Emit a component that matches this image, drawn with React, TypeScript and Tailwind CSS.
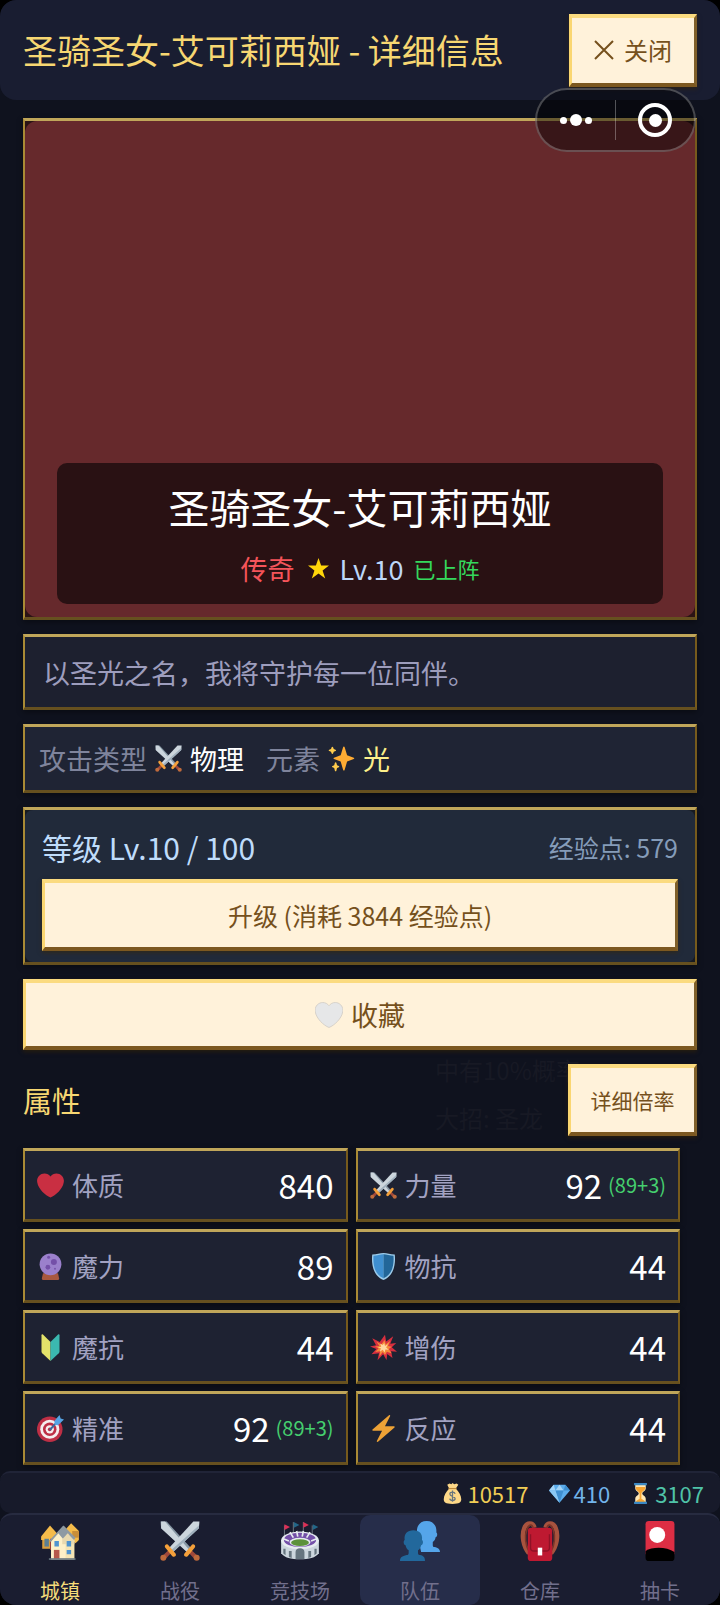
import type { ReactNode } from "react";
import { clsx } from "clsx";

interface IconProps {
    className?: string;
}

interface Stat {
    id: string;
    label: string;
    value: number;
    bonus?: string;
    icon: (props: IconProps) => ReactNode;
}

const HEART =
    "M35.885 11.833c0-5.45-4.418-9.868-9.867-9.868-3.308 0-6.227 1.633-8.018 4.129-1.791-2.496-4.71-4.129-8.017-4.129-5.45 0-9.868 4.417-9.868 9.868 0 .772.098 1.52.266 2.241C1.751 22.587 11.216 31.568 18 34.034c6.783-2.466 16.249-11.447 17.617-19.959.17-.721.268-1.469.268-2.242z";

function Svg({ className, children }: { className?: string; children: ReactNode }) {
    return (
        <svg viewBox="0 0 36 36" className={clsx("shrink-0", className)} aria-hidden="true">
            {children}
        </svg>
    );
}

function HeartIcon({ className }: IconProps) {
    return (
        <Svg className={className}>
            <path fill="#c92f42" d={HEART} />
        </Svg>
    );
}

function WhiteHeartIcon({ className }: IconProps) {
    return (
        <Svg className={className}>
            <path fill="#e6e7e8" stroke="#cfcac2" strokeWidth="1" d={HEART} />
        </Svg>
    );
}

function SwordsIcon({ className }: IconProps) {
    return (
        <Svg className={className}>
            <path fill="#8899a6" d="M0.5 0.5h5.5L28.5 25l-3.8 3.4L1 6.5z" />
            <path fill="#ccd6dd" d="M1 4V.5h3.5L26.8 26.5l-2 1.9L1 6.5z" />
            <path fill="#ccd6dd" d="M35.5 .5H30L7.5 25l3.8 3.4L35 6.5z" />
            <path fill="#9fb0bd" d="M35 4v2.5L11.3 28.4l-1.8-1.7z" />
            <path fill="#a0493a" d="M8.6 25.4l2.2 2.4-5.6 6.2-3-2.8zM27.4 25.4l-2.2 2.4 5.6 6.2 3-2.8z" />
            <path fill="#f4a03a" d="M4.8 21.6c.9-.9 2.4-.7 3 .4l6 7c.8 1 .7 2.2-.1 2.8-.9.7-2 .4-2.8-.4l-5.7-6.9c-.9-.8-1.2-2-.4-2.9zM31.2 21.6c-.9-.9-2.4-.7-3 .4l-6 7c-.8 1-.7 2.2.1 2.8.9.7 2 .4 2.8-.4l5.7-6.9c.9-.8 1.2-2 .4-2.9z" />
            <circle cx="3" cy="33" r="2.7" fill="#be6a3c" />
            <circle cx="33" cy="33" r="2.7" fill="#be6a3c" />
        </Svg>
    );
}

function SparklesIcon({ className }: IconProps) {
    return (
        <Svg className={className}>
            <path fill="#ffac33" d="M34.347 16.893l-8.899-3.294-3.323-10.891c-.128-.42-.517-.708-.956-.708-.439 0-.828.288-.956.708l-3.322 10.891-8.9 3.294c-.393.146-.653.519-.653.938 0 .418.26.793.653.938l8.895 3.293 3.324 11.223c.126.424.516.715.959.715.442 0 .833-.291.959-.716l3.324-11.223 8.896-3.293c.391-.144.652-.518.652-.937 0-.418-.261-.792-.653-.938z" />
            <path fill="#ffcc4d" d="M14.347 27.894l-2.314-.856-.9-3.3c-.118-.436-.513-.738-.964-.738-.451 0-.846.302-.965.737l-.9 3.3-2.313.856c-.393.145-.653.52-.653.938 0 .418.26.793.653.938l2.301.853.907 3.622c.112.444.511.756.97.756.459 0 .858-.312.97-.757l.907-3.622 2.301-.853c.393-.144.653-.519.653-.937 0-.418-.26-.793-.653-.937zM10.009 6.231l-2.364-.875-.876-2.365c-.145-.393-.519-.653-.938-.653-.418 0-.792.26-.938.653l-.875 2.365-2.365.875c-.393.146-.653.52-.653.938 0 .418.26.793.653.938l2.365.875.875 2.365c.146.393.52.653.938.653.418 0 .792-.26.938-.653l.875-2.365 2.365-.875c.393-.146.653-.52.653-.938 0-.418-.26-.792-.653-.938z" />
        </Svg>
    );
}

function CrystalBallIcon({ className }: IconProps) {
    return (
        <Svg className={className}>
            <path fill="#a8583f" d="M8 27h20l1.5 6.5c.2 1.5-.6 2.5-2 2.5h-19c-1.4 0-2.2-1-2-2.5z" />
            <circle cx="18" cy="15" r="14.5" fill="#9b80cc" />
            <circle cx="22.5" cy="12" r="4" fill="#7450a8" />
            <circle cx="14.5" cy="19" r="3.2" fill="#7450a8" />
            <circle cx="15.5" cy="5.5" r="2" fill="#7450a8" />
            <circle cx="24" cy="21" r="1.2" fill="#7450a8" />
        </Svg>
    );
}

function ShieldIcon({ className }: IconProps) {
    return (
        <Svg className={className}>
            <path fill="#9ccbea" d="M18 0c5 0 9 2 15 2 1 8 1 28-15 34C2 30 2 10 3 2c6 0 10-2 15-2z" />
            <path fill="#3f8fd0" d="M18 1.8v32C4.5 28 4 12 4.7 3.7 9.5 3.7 14 1.8 18 1.8z" />
            <path fill="#226699" d="M18 1.8v32C31.5 28 32 12 31.3 3.7 26.5 3.7 22 1.8 18 1.8z" />
        </Svg>
    );
}

function BeginnerIcon({ className }: IconProps) {
    return (
        <Svg className={className}>
            <path fill="#e3e36a" d="M6 1.5c0-1.2 1-1.5 1.9-.7L18 10.5V36L7 25.5c-.7-.7-1-1.3-1-2z" />
            <path fill="#3bb8b0" d="M30 1.5c0-1.2-1-1.5-1.9-.7L18 10.5V36l11-10.5c.7-.7 1-1.3 1-2z" />
        </Svg>
    );
}

function BoomIcon({ className }: IconProps) {
    return (
        <Svg className={className}>
            <path fill="#d82f3f" d="M20 1l1.5 9L31 3l-4 10 8-1-6 5.5 7 6-8-.5 2 9-7-5.5-1 8-4.500-7.500L10 35l2-9.500L2 27l6.500-7L0 16.500l8-1.500-5-9.500 10 5z" />
            <path fill="#f58a3a" d="M19.5 8l1.5 6 6-5-3 7 5 1-4 3 4 6-6.500-2.500L20 28l-3-4-4.500 6 1-7-6.500 1 4.500-5-5-2.500 6-.5-4-6 6.500 4z" />
            <path fill="#ffd7a0" d="M19 12l1 4 4-2.500-2.500 4.500 3.500 3-4.500-.5-1 4-2.500-3.500-4 2.500 1.500-4.500-4-1 4.500-1-1.500-4.500 3.500 2z" />
        </Svg>
    );
}

function TargetIcon({ className }: IconProps) {
    return (
        <Svg className={className}>
            <circle cx="17" cy="19" r="17" fill="#be2f45" />
            <circle cx="17" cy="19" r="12.7" fill="#f5eeee" />
            <circle cx="17" cy="19" r="9" fill="#be2f45" />
            <circle cx="17" cy="19" r="5.5" fill="#f5eeee" />
            <circle cx="17" cy="19" r="2.5" fill="#be2f45" />
            <path d="M17 20L28 8" stroke="#3b6aa0" strokeWidth="2.5" />
            <path fill="#55a3e4" d="M23 8L30 0l1.5 4.5L36 6l-8 7.5-4-.5z" />
        </Svg>
    );
}

function ZapIcon({ className }: IconProps) {
    return (
        <Svg className={className}>
            <path fill="#eda236" d="M32.938 15.651C32.792 15.26 32.418 15 32 15H19.925L26.89 1.458c.219-.426.106-.947-.271-1.243C26.437.071 26.218 0 26 0c-.233 0-.466.082-.653.243L18 6.588 3.347 19.243c-.316.273-.43.714-.284 1.105S3.582 21 4 21h12.075L9.11 34.542c-.219.426-.106.947.271 1.243.182.144.401.215.619.215.233 0 .466-.082.653-.243L18 29.412l14.653-12.655c.317-.273.43-.714.285-1.106z" />
        </Svg>
    );
}

function StarIcon({ className }: IconProps) {
    return (
        <Svg className={className}>
            <path fill="#ffd60a" d="M18 0l4.5 13H36L25 21.5 29.5 35 18 26.5 6.5 35 11 21.5 0 13h13.500z" />
        </Svg>
    );
}

function HousesIcon({ className }: IconProps) {
    return (
        <Svg className={className}>
            <path fill="#d99e3f" d="M2 13h14v12H2z" />
            <path fill="#f5bb4a" d="M1 14L9 4l8 9v4H1z" />
            <path fill="#f5bb4a" d="M21 10l7-8 7 7v8l-3 3z" />
            <path fill="#c98e3a" d="M29 9h6v6h-6z" />
            <path fill="#5a7f94" d="M4 16h4v7H4z" />
            <path fill="#a0413b" d="M9 16h4v10H9z" />
            <path fill="#f4e4b4" d="M10 18l7-9 5-4 9 12v18H10z" />
            <path fill="#fdf0c8" d="M23 17l-6-6-7 8v15h13z" />
            <path fill="#8e9aa3" d="M8.5 17.5L21 4l11 11-1.500 2-6-5-3 5-5-6-7 8z" />
            <path fill="#e8d9b0" d="M20 16.5l5-5.500 6 7v3H20z" />
            <path fill="#4f94d0" d="M13 18h4v5h-4zM24 18h4v5h-4zM24 26h4v4h-4z" />
            <path fill="#b5584a" d="M12.5 26h5v8h-5z" />
            <path fill="#66757f" d="M8 33.5h24V35H8z" />
        </Svg>
    );
}

function StadiumIcon({ className }: IconProps) {
    return (
        <Svg className={className}>
            <path stroke="#77808a" strokeWidth=".8" d="M4 4v10M12 1v10M21 1v10M29 4v10" />
            <path fill="#dd2e55" d="M4 3l5 2.5L4 8zM21 1l5 2.5L21 6z" />
            <path fill="#226688" d="M12.5 1l5 2.5-5 2.5zM29.5 3l5 2.5-5 2.5z" />
            <path fill="#ccd6dd" d="M1 17h34v12c-3 4-9 5.5-17 5.500S4 33 1 29z" />
            <ellipse cx="18" cy="17.5" rx="17" ry="8" fill="#e6ebf0" />
            <ellipse cx="18" cy="17" rx="14.5" ry="6.5" fill="#7450a8" />
            <path stroke="#e6ebf0" strokeWidth="1.5" d="M9 10l3 5M15 9l1 5M21 9l-1 5M27 10l-3 5M3 16l5 2M33 16l-5 2" />
            <ellipse cx="18" cy="19" rx="9.5" ry="4" fill="#e6ebf0" />
            <ellipse cx="18" cy="19.5" rx="8" ry="3" fill="#5c913b" />
            <path fill="#66757f" d="M14 34.3V28c0-2 1.5-3.500 4-3.500s4 1.500 4 3.500v6.300zM8 27h2.500v6.300L8 32.500zM25.500 27H28v5.500l-2.500.8zM3 25h2v5.800l-2-1.600zM31 25h2v4.200l-2 1.600z" />
        </Svg>
    );
}

function UsersIcon({ className }: IconProps) {
    return (
        <Svg className={className}>
            <path fill="#55a5ea" d="M36 28c0-2.5-1.500-3.700-5-4.500-1.200-.3-1.500-1-1.500-2v-2.500c1.500-1 2.300-2.500 2.500-4.300 1.600-.3 2-3.700.7-4.400C33.300 4.500 30 0 24 0s-9.300 4.500-8.700 10.300c-1 .7-.6 4 .7 4.400L19 28z" />
            <path fill="#22689c" d="M0 36c0-3 1.800-4.300 6-5.300 1.300-.3 1.800-1 1.800-2v-2.300c-1.500-1-2.500-2.700-2.800-4.600-1.800-.3-2.300-4-.8-4.800C3.500 11.500 6.500 8.300 12 8.300s8.500 3.200 7.800 8.700c1.500.8 1 4.500-.8 4.800-.3 1.900-1.300 3.600-2.800 4.600v2.300c0 1 .5 1.700 1.800 2 3.500.8 4.500 2.300 4.500 5.300z" />
        </Svg>
    );
}

function BackpackIcon({ className }: IconProps) {
    return (
        <Svg className={className}>
            <path fill="none" stroke="#a8533e" strokeWidth="4" d="M13 6C12 1 6 1 4 6c-3 7-1 17 4 23M23 6c1-5 7-5 9 0 3 7 1 17-4 23" />
            <path fill="none" stroke="#7c3528" strokeWidth="1.5" d="M12 7C11 2 8 3 6 8c-2 6-1 14 2 19M24 7c1-5 4-4 6 1 2 6 1 14-2 19" />
            <path fill="#be1931" d="M10 6h16c2 0 3 1 3 3v24c0 2-1 3-3 3H10c-2 0-3-1-3-3V9c0-2 1-3 3-3z" />
            <path fill="none" stroke="#8f1226" strokeWidth="1.2" d="M9.500 12v12c0 2 1 3 3 3h11c2 0 3-1 3-3V12" />
            <path fill="#fff" d="M16 24h4v7h-4z" />
        </Svg>
    );
}

function CardIcon({ className }: IconProps) {
    return (
        <Svg className={className}>
            <path fill="#dd2e44" d="M8 0h20c2 0 3 1 3 3v27H5V3c0-2 1-3 3-3z" />
            <path fill="#000" d="M5 27c6-4 19-4 26 1v5c0 2-1 3-3 3H8c-2 0-3-1-3-3z" />
            <circle cx="15.5" cy="12.5" r="7.2" fill="#fff" />
        </Svg>
    );
}

function MoneyBagIcon({ className }: IconProps) {
    return (
        <Svg className={className}>
            <path fill="#fdd888" d="M12 10h12c5 5 9 12 9 18 0 5-3 8-15 8S3 33 3 28c0-6 4-13 9-18zM9 3l4-2 3 1 2-2 3 2 4-1 3 2-4 6H12z" />
            <path stroke="#bf8a3a" strokeWidth="2" d="M11 9.5h14" />
            <path fill="none" stroke="#67757f" strokeWidth="2.2" d="M22.5 18.5c-.5-2-2-3-4.500-3-2.700 0-4.500 1.300-4.500 3.500 0 5 9 2.500 9 7.500 0 2.200-2 3.500-4.500 3.500-2.700 0-4.300-1-4.700-3.300M18 13v19" />
        </Svg>
    );
}

function GemIcon({ className }: IconProps) {
    return (
        <Svg className={className}>
            <path fill="#5dadec" d="M8 3h20l8 10-18 21L0 13z" />
            <path fill="#a5d5f7" d="M8 3l3 10H0zM18 3l7 10H11z" />
            <path fill="#3f8fd0" d="M28 3l8 10H25zM11 13h14l-7 21z" />
            <path fill="#8cc8f3" d="M0 13h11l7 21z" />
        </Svg>
    );
}

function HourglassIcon({ className }: IconProps) {
    return (
        <Svg className={className}>
            <path fill="#ffe8b6" d="M9 3h18v6c0 5-6 6-6 9s6 4 6 9v6H9v-6c0-5 6-6 6-9s-6-4-6-9z" />
            <path fill="#f5a331" d="M10 7h16v2c0 4-6 5.5-6.500 9V27l6 4v2h-15v-2l6-4v-9C16 14.500 10 13 10 9z" />
            <path fill="#3b88c3" d="M7 0h22v4H7zM7 32h22v4H7z" />
        </Svg>
    );
}

const STATS: Stat[] = [
    { id: "vit", label: "体质", value: 840, icon: HeartIcon },
    { id: "str", label: "力量", value: 92, bonus: "(89+3)", icon: SwordsIcon },
    { id: "mag", label: "魔力", value: 89, icon: CrystalBallIcon },
    { id: "pdef", label: "物抗", value: 44, icon: ShieldIcon },
    { id: "mdef", label: "魔抗", value: 44, icon: BeginnerIcon },
    { id: "dmg", label: "增伤", value: 44, icon: BoomIcon },
    { id: "acc", label: "精准", value: 92, bonus: "(89+3)", icon: TargetIcon },
    { id: "rea", label: "反应", value: 44, icon: ZapIcon },
];

const CURRENCIES = [
    { id: "gold", value: 10517, icon: MoneyBagIcon, color: "text-[#f0cd55]" },
    { id: "gem", value: 410, icon: GemIcon, color: "text-[#72b4ea]" },
    { id: "time", value: 3107, icon: HourglassIcon, color: "text-[#4fc3a8]" },
];

const TABS = [
    { id: "town", label: "城镇", icon: HousesIcon, highlight: true },
    { id: "battle", label: "战役", icon: SwordsIcon },
    { id: "arena", label: "竞技场", icon: StadiumIcon },
    { id: "team", label: "队伍", icon: UsersIcon, active: true },
    { id: "bag", label: "仓库", icon: BackpackIcon },
    { id: "gacha", label: "抽卡", icon: CardIcon },
];

function Panel({ className, children }: { className?: string; children: ReactNode }) {
    return (
        <div
            className={clsx(
                "border-x-2 border-y-[3px] border-t-[#c0a65a] border-r-[#765a1c] border-b-[#66501f] border-l-[#a98a35] shadow-[0_2px_6px_rgba(0,0,0,0.4)]",
                className
            )}
        >
            {children}
        </div>
    );
}

function GoldButton({ className, children }: { className?: string; children: ReactNode }) {
    return (
        <button
            type="button"
            className={clsx(
                "flex items-center justify-center border-x-[3px] border-y-4 border-t-[#fbdb80] border-r-[#80602a] border-b-[#7c5820] border-l-[#fad671] bg-[#fff2da] text-[#75501c] shadow-[0_2px_4px_rgba(60,40,0,0.5)]",
                className
            )}
        >
            {children}
        </button>
    );
}

// Floating mini-program menu, sits over the page
function Capsule() {
    return (
        <div className="absolute top-[88px] right-6 z-10 flex h-16 w-[161px] items-center rounded-full border-2 border-white/25 bg-black/45">
            <button type="button" aria-label="更多" className="flex h-full flex-1 items-center justify-center gap-[3px]">
                <span className="size-[7px] rounded-full bg-white" />
                <span className="size-3 rounded-full bg-white" />
                <span className="size-[7px] rounded-full bg-white" />
            </button>
            <span className="h-10 w-px bg-white/30" />
            <button type="button" aria-label="退出" className="flex h-full flex-1 items-center justify-center">
                <span className="flex size-[34px] items-center justify-center rounded-full border-4 border-white">
                    <span className="size-[13px] rounded-full bg-white" />
                </span>
            </button>
        </div>
    );
}

export default function App() {
    return (
        <div className="bg-black font-['Noto_Sans_CJK_SC',sans-serif] leading-none">
            <div className="relative flex min-h-screen flex-col overflow-hidden rounded-[16px] bg-[#0f121e]">
                <header className="flex h-[100px] items-center justify-between rounded-[16px] bg-[#191d31] px-[23px]">
                    <h1 className="text-[34px] whitespace-nowrap text-[#f7d772]">圣骑圣女-艾可莉西娅 - 详细信息</h1>
                    <GoldButton className="h-[73px] w-32 gap-[10px] text-[24px]">
                        <svg viewBox="0 0 20 20" className="size-5" aria-hidden="true">
                            <path d="M1 1l18 18M19 1L1 19" stroke="currentColor" strokeWidth="2" />
                        </svg>
                        关闭
                    </GoldButton>
                </header>
                <Capsule />

                <main className="flex flex-1 flex-col gap-[14px] px-[23px] pt-[18px] pb-[6px]">
                    <Panel className="bg-[#2b1315]">
                        <div className="flex h-[496px] flex-col justify-end rounded-[12px] bg-[#66292c] px-8 pb-[13px]">
                            <div className="flex h-[141px] flex-col items-center justify-center gap-7 rounded-[10px] bg-[#291113]">
                                <h2 className="text-[41px] text-white">圣骑圣女-艾可莉西娅</h2>
                                <div className="flex items-center gap-[10px]">
                                    <span className="mr-1 text-[27px] text-[#f5545a]">传奇</span>
                                    <StarIcon className="size-[21px]" />
                                    <span className="text-[27px] text-[#bcd6f8]">Lv.10</span>
                                    <span className="text-[22px] text-[#35d85c]">已上阵</span>
                                </div>
                            </div>
                        </div>
                    </Panel>

                    <Panel className="flex h-[76px] items-center bg-[#1d202f] px-[18px] text-[27px] text-[#9d9dbd]">
                        <p>以圣光之名，我将守护每一位同伴。</p>
                    </Panel>

                    <Panel className="flex h-[69px] items-center gap-[22px] bg-[#1f2434] px-[14px] text-[27px]">
                        <div className="flex items-center gap-2">
                            <span className="text-[#7f849c]">攻击类型</span>
                            <SwordsIcon className="size-[27px]" />
                            <span className="text-white">物理</span>
                        </div>
                        <div className="flex items-center gap-2">
                            <span className="text-[#7f849c]">元素</span>
                            <SparklesIcon className="size-[27px]" />
                            <span className="text-[#fdf08a]">光</span>
                        </div>
                    </Panel>

                    <Panel className="bg-[#171a20]">
                        <div className="flex flex-col gap-[17px] rounded-[8px] bg-[#212a3a] px-[17px] pt-[22px] pb-[11px]">
                            <div className="flex items-center justify-between">
                                <span className="text-[30px] text-[#bfdcfa]">等级 Lv.10 / 100</span>
                                <span className="text-[25px] text-[#859cb9]">经验点: 579</span>
                            </div>
                            <GoldButton className="h-[72px] w-full text-[25px]">升级 (消耗 3844 经验点)</GoldButton>
                        </div>
                    </Panel>

                    <GoldButton className="h-[71px] w-full gap-2 text-[27px]">
                        <WhiteHeartIcon className="size-[28px]" />
                        收藏
                    </GoldButton>

                    <section className="flex flex-col gap-3">
                        <div className="relative flex items-center justify-between">
                            {/* Page underneath showing faintly through the overlay */}
                            <div aria-hidden="true" className="absolute -top-1.5 left-[412px] flex flex-col gap-6 text-[24px] whitespace-nowrap text-[#171924]">
                                <span>中有10%概率</span>
                                <span>大招: 圣龙</span>
                            </div>
                            <h3 className="text-[29px] text-[#f7d772]">属性</h3>
                            <GoldButton className="relative h-[72px] w-[129px] text-[21px]">详细倍率</GoldButton>
                        </div>
                        <div className="mr-[17px] grid grid-cols-2 gap-x-2 gap-y-[7px]">
                            {STATS.map((stat) => {
                                const Icon = stat.icon;
                                return (
                                    <Panel key={stat.id} className="flex h-[74px] items-center justify-between bg-[#1e2232] px-3">
                                        <span className="flex items-center gap-2 text-[26px] text-[#a2a2c2]">
                                            <Icon className="size-[27px]" />
                                            {stat.label}
                                        </span>
                                        <span className="flex items-center gap-[6px] text-[33px] text-white">
                                            {stat.value}
                                            {stat.bonus && <span className="text-[20px] text-[#45cf6e]">{stat.bonus}</span>}
                                        </span>
                                    </Panel>
                                );
                            })}
                        </div>
                    </section>
                </main>

                <div className="flex h-[42px] items-center justify-end gap-5 rounded-[10px] border-t-2 border-[#202437] bg-[#171a2a] px-4 text-[22px]">
                    {CURRENCIES.map((item) => {
                        const Icon = item.icon;
                        return (
                            <span key={item.id} className={clsx("flex items-center gap-1", item.color)}>
                                <Icon className="size-[21px]" />
                                {item.value}
                            </span>
                        );
                    })}
                </div>

                <nav className="grid h-[92px] grid-cols-6 rounded-[12px] border-t-2 border-[#272b40] bg-[#1a1d30]">
                    {TABS.map((tab) => {
                        const Icon = tab.icon;
                        return (
                            <button
                                key={tab.id}
                                type="button"
                                className={clsx(
                                    "flex flex-col items-center justify-end gap-5 rounded-[10px] pb-1 text-[20px]",
                                    tab.active && "bg-[#262d4a]",
                                    tab.highlight ? "text-[#f5dc7a]" : "text-[#716f8c]"
                                )}
                            >
                                <Icon className="size-10" />
                                {tab.label}
                            </button>
                        );
                    })}
                </nav>
            </div>
        </div>
    );
}
